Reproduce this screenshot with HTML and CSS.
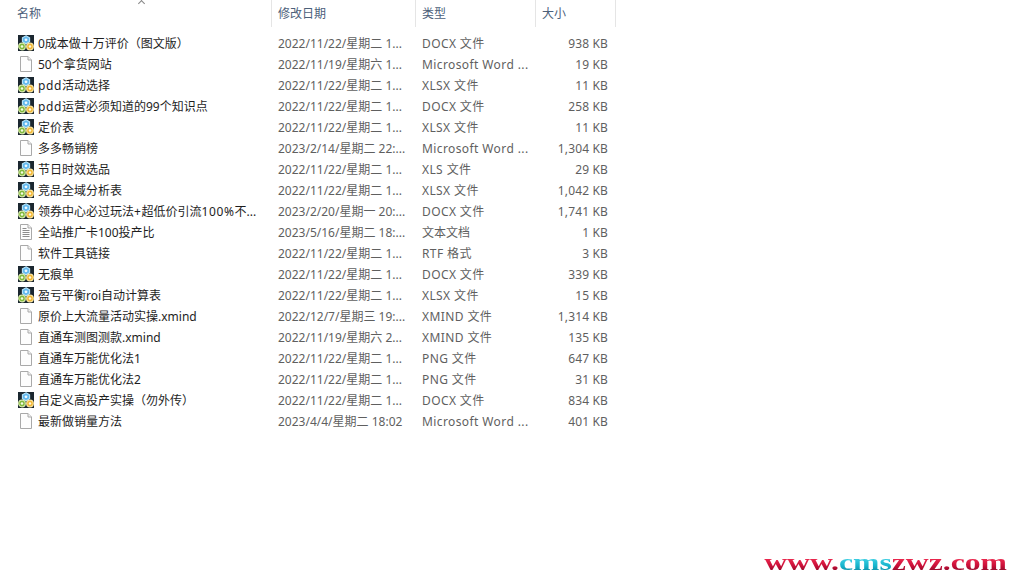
FILE: index.html
```html
<!DOCTYPE html>
<html>
<head>
<title>文件列表</title>
<link rel="stylesheet" href="styles.css">
</head>
<body>

<svg class="defs" width="0" height="0">
  <symbol id="app" viewBox="0 0 16 16">
    <rect width="16" height="16" fill="#1b2730"/>
    <path d="M8 .8l3.600 2v4l-3.600 2-3.600-2v-4z" fill="#62b8ee" stroke="#b9e6fb" stroke-width="1.100"/>
    <circle cx="4" cy="11.500" r="3.300" fill="#7fb83c" stroke="#d8ecaa" stroke-width="1.200"/>
    <circle cx="12" cy="11.500" r="3.300" fill="#f2b52e" stroke="#fce6a0" stroke-width="1.200"/>
    <circle cx="8" cy="4.800" r="1.400" fill="#eef9ff"/>
    <circle cx="4" cy="11.500" r="1.300" fill="#f5fbe2"/>
    <circle cx="12" cy="11.500" r="1.300" fill="#fff8de"/>
  </symbol>
  <symbol id="blank" viewBox="0 0 16 16">
    <path d="M2.500.5h7.500l3.500 3.500v11.500h-11z" fill="#fdfdfd" stroke="#a9a9a9"/>
    <path d="M10 .5v3.500h3.500" fill="#f2f2f2" stroke="#a9a9a9"/>
  </symbol>
  <symbol id="text" viewBox="0 0 16 16">
    <path d="M2.500.5h7.500l3.500 3.500v11.500h-11z" fill="#fdfdfd" stroke="#a9a9a9"/>
    <path d="M10 .5v3.500h3.500" fill="#f2f2f2" stroke="#a9a9a9"/>
    <path d="M4.500 4.500h4M4.500 6.500h7M4.500 8.500h7M4.500 10.500h7M4.500 12.500h7" stroke="#8c8c8c"/>
  </symbol>
</svg>

<!-- HEADER -->
<div class="head">
  <div class="col-h col-name">名称<span class="sort"></span></div>
  <div class="col-h">修改日期</div>
  <div class="col-h">类型</div>
  <div class="col-h">大小</div>
</div>

<!-- ROWS -->
<div class="list" id="list">
  <div class="row"><div class="name"><svg class="ico"><use href="#app"/></svg>0成本做十万评价（图文版）</div><div class="cell">2022/11/22/星期二 1...</div><div class="cell type">DOCX 文件</div><div class="cell size">938 KB</div></div>
  <div class="row"><div class="name"><svg class="ico"><use href="#blank"/></svg>50个拿货网站</div><div class="cell">2022/11/19/星期六 1...</div><div class="cell type">Microsoft Word ...</div><div class="cell size">19 KB</div></div>
  <div class="row"><div class="name"><svg class="ico"><use href="#app"/></svg><span><span class="lat">pdd</span>活动选择</span></div><div class="cell">2022/11/22/星期二 1...</div><div class="cell type">XLSX 文件</div><div class="cell size">11 KB</div></div>
  <div class="row"><div class="name"><svg class="ico"><use href="#app"/></svg><span><span class="lat">pdd</span>运营必须知道的99个知识点</span></div><div class="cell">2022/11/22/星期二 1...</div><div class="cell type">DOCX 文件</div><div class="cell size">258 KB</div></div>
  <div class="row"><div class="name"><svg class="ico"><use href="#app"/></svg>定价表</div><div class="cell">2022/11/22/星期二 1...</div><div class="cell type">XLSX 文件</div><div class="cell size">11 KB</div></div>
  <div class="row"><div class="name"><svg class="ico"><use href="#blank"/></svg>多多畅销榜</div><div class="cell">2023/2/14/星期二 22:...</div><div class="cell type">Microsoft Word ...</div><div class="cell size">1,304 KB</div></div>
  <div class="row"><div class="name"><svg class="ico"><use href="#app"/></svg>节日时效选品</div><div class="cell">2022/11/22/星期二 1...</div><div class="cell type">XLS 文件</div><div class="cell size">29 KB</div></div>
  <div class="row"><div class="name"><svg class="ico"><use href="#app"/></svg>竞品全域分析表</div><div class="cell">2022/11/22/星期二 1...</div><div class="cell type">XLSX 文件</div><div class="cell size">1,042 KB</div></div>
  <div class="row"><div class="name"><svg class="ico"><use href="#app"/></svg><span>领券中心必过玩法<span class="lat">+</span>超低价引流<span class="lat">100%</span>不...</span></div><div class="cell">2023/2/20/星期一 20:...</div><div class="cell type">DOCX 文件</div><div class="cell size">1,741 KB</div></div>
  <div class="row"><div class="name"><svg class="ico"><use href="#text"/></svg>全站推广卡100投产比</div><div class="cell">2023/5/16/星期二 18:...</div><div class="cell">文本文档</div><div class="cell size">1 KB</div></div>
  <div class="row"><div class="name"><svg class="ico"><use href="#blank"/></svg>软件工具链接</div><div class="cell">2022/11/22/星期二 1...</div><div class="cell type">RTF 格式</div><div class="cell size">3 KB</div></div>
  <div class="row"><div class="name"><svg class="ico"><use href="#app"/></svg>无痕单</div><div class="cell">2022/11/22/星期二 1...</div><div class="cell type">DOCX 文件</div><div class="cell size">339 KB</div></div>
  <div class="row"><div class="name"><svg class="ico"><use href="#app"/></svg>盈亏平衡roi自动计算表</div><div class="cell">2022/11/22/星期二 1...</div><div class="cell type">XLSX 文件</div><div class="cell size">15 KB</div></div>
  <div class="row"><div class="name"><svg class="ico"><use href="#blank"/></svg>原价上大流量活动实操.xmind</div><div class="cell">2022/12/7/星期三 19:...</div><div class="cell type">XMIND 文件</div><div class="cell size">1,314 KB</div></div>
  <div class="row"><div class="name"><svg class="ico"><use href="#blank"/></svg>直通车测图测款.xmind</div><div class="cell">2022/11/19/星期六 2...</div><div class="cell type">XMIND 文件</div><div class="cell size">135 KB</div></div>
  <div class="row"><div class="name"><svg class="ico"><use href="#blank"/></svg>直通车万能优化法1</div><div class="cell">2022/11/22/星期二 1...</div><div class="cell type">PNG 文件</div><div class="cell size">647 KB</div></div>
  <div class="row"><div class="name"><svg class="ico"><use href="#blank"/></svg>直通车万能优化法2</div><div class="cell">2022/11/22/星期二 1...</div><div class="cell type">PNG 文件</div><div class="cell size">31 KB</div></div>
  <div class="row"><div class="name"><svg class="ico"><use href="#app"/></svg>自定义高投产实操（勿外传）</div><div class="cell">2022/11/22/星期二 1...</div><div class="cell type">DOCX 文件</div><div class="cell size">834 KB</div></div>
  <div class="row"><div class="name"><svg class="ico"><use href="#blank"/></svg>最新做销量方法</div><div class="cell">2023/4/4/星期二 18:02</div><div class="cell type">Microsoft Word ...</div><div class="cell size">401 KB</div></div>
</div>

<!-- WATERMARK -->
<div class="mark"><span class="red">www.</span><span class="cyan">cms</span><span class="red">zwz.com</span></div>

</body>
</html>
```

FILE: styles.css
```css
body {
  margin: 0; width: 1016px; height: 581px; overflow: hidden;
  background: #fff; color: #1e1e1e;
  font-family: "Noto Sans", "Noto Sans CJK SC", sans-serif;
  font-size: 12px;
}
.defs {position: absolute;}

.head {display: grid; grid-template-columns: 272px 144px 120px 80px; width: 616px; height: 27px;}
.col-h {
  position: relative; box-sizing: border-box; padding-left: 6px;
  border-right: 1px solid #e5e5e5;
  line-height: 27px; color: #4c607a;
}
.col-name {padding-left: 17px;}
.sort {
  position: absolute; left: 139px; top: 1px; width: 5px; height: 5px;
  box-sizing: border-box;
  border-left: 1px solid #8a8a8a; border-top: 1px solid #8a8a8a;
  transform: rotate(45deg);
}

.list {padding-top: 6px;}
.row {display: grid; grid-template-columns: 272px 144px 120px 80px; width: 616px; height: 21px; line-height: 21px;}
.name {display: flex; align-items: flex-start; gap: 4px; padding-left: 18px; white-space: nowrap;}
.ico {width: 16px; height: 16px; flex: none; margin-top: 2px;}
.lat {letter-spacing: .6px;}
.cell {padding-left: 6px; color: #5f5f5f; white-space: nowrap;}
.type {letter-spacing: .4px;}
.size {padding: 0 8px 0 0; text-align: right; letter-spacing: .15px;}

.mark {
  position: absolute; right: 9px; bottom: 6px;
  font-family: "Liberation Serif", serif; font-size: 24px; font-weight: bold; line-height: 26px;
  transform: scaleX(1.32); transform-origin: right center;
  filter: blur(.4px);
}
.mark span {color: transparent; -webkit-background-clip: text; background-clip: text;}
.red {background-image: linear-gradient(180deg, #ef2a50 35%, #c80f38 65%, #8f0a2a 85%);}
.cyan {background-image: linear-gradient(180deg, #3fd0e4 35%, #16b4cc 65%, #0f8ea6 85%);}
```
